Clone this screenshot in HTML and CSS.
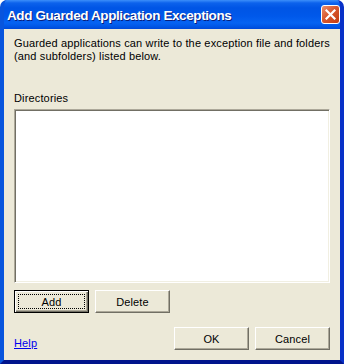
FILE: index.html
```html
<!DOCTYPE html>
<html>
<head>
<meta charset="utf-8">
<link rel="stylesheet" href="styles.css">
</head>
<body>
<div class="window">
  <div class="titlebar">
    <span class="title">Add Guarded Application Exceptions</span>
    <span class="close">
      <svg width="11" height="11" viewBox="0 0 11 11"><path d="M1.5 1.5 L9.5 9.5 M9.5 1.5 L1.5 9.5" stroke="#fff" stroke-width="2.2" stroke-linecap="square"/></svg>
    </span>
  </div>
  <div class="client">
    <p class="intro">Guarded applications can write to the exception file and folders<br>(and subfolders) listed below.</p>
    <div class="label">Directories</div>
    <div class="listbox"></div>
    <div class="row">
      <button class="btn default"><span class="focus">Add</span></button>
      <button class="btn">Delete</button>
    </div>
    <div class="footer">
      <a class="help" href="#">Help</a>
      <div class="actions">
        <button class="btn">OK</button>
        <button class="btn">Cancel</button>
      </div>
    </div>
  </div>
</div>
</body>
</html>
```

FILE: styles.css
```css
html, body {
  margin: 0;
  padding: 0;
  background: #ffffff;
}
.window {
  width: 344px;
  height: 364px;
  box-sizing: border-box;
  display: flex;
  flex-direction: column;
  border-radius: 7px 7px 0 0;
  background: #0a50dc;
  border-left: 4px solid #0855dd;
  border-right: 4px solid #0831c8;
  border-bottom: 4px solid #00148c;
  overflow: hidden;
}
.titlebar {
  height: 29px;
  margin: 0 -4px;
  padding: 0 4px 0 7px;
  box-sizing: border-box;
  display: flex;
  align-items: center;
  justify-content: space-between;
  background: linear-gradient(to bottom, #3c8ffa 0px, #0c62ec 3px, #0055e5 8px, #0058ea 16px, #0663f2 23px, #0054e3 27px, #0048d8 29px);
}
.title {
  font-family: "Liberation Sans", Arial, sans-serif;
  font-weight: bold;
  font-size: 13.5px;
  letter-spacing: -0.4px;
  color: #ffffff;
  text-shadow: 1px 1px 0 #0a1e7a;
  padding-top: 1px;
}
.close {
  width: 19px;
  height: 19px;
  box-sizing: border-box;
  border: 1px solid #ffffff;
  border-radius: 3px;
  background: linear-gradient(135deg, #ea8f6e 0%, #d8582e 45%, #c23c12 100%);
  display: flex;
  align-items: center;
  justify-content: center;
  margin-top: -1px;
}
.client {
  flex: 1;
  background: #ece9d8;
  padding: 8px 10px 10px 10px;
  display: flex;
  flex-direction: column;
  font-family: "Liberation Sans", Arial, sans-serif;
  font-size: 11px;
  line-height: 13px;
  letter-spacing: 0.15px;
  color: #000000;
}
.intro {
  margin: 0;
}
.label {
  margin-top: 29px;
}
.listbox {
  margin-top: 4px;
  height: 174px;
  box-sizing: border-box;
  background: #ffffff;
  border: 1px solid;
  border-color: #aca899 #ffffff #ffffff #aca899;
  box-shadow: inset 1px 1px 0 #716f64, inset -1px -1px 0 #f1efe2;
}
.row {
  margin-top: 7px;
  display: flex;
  gap: 6px;
}
.btn {
  width: 75px;
  height: 23px;
  box-sizing: border-box;
  padding: 0;
  margin: 0;
  font-family: "Liberation Sans", Arial, sans-serif;
  font-size: 11px;
  letter-spacing: 0.15px;
  color: #000000;
  background: #ece9d8;
  border: 1px solid;
  border-color: #ffffff #716f64 #716f64 #ffffff;
  box-shadow: inset -1px -1px 0 #aca899;
  border-radius: 0;
}
.btn.default {
  border: 1px solid #000000;
  box-shadow: inset 1px 1px 0 #ffffff, inset -1px -1px 0 #716f64, inset -2px -2px 0 #aca899;
  padding: 3px;
}
.focus {
  display: flex;
  align-items: center;
  justify-content: center;
  height: 100%;
  box-sizing: border-box;
  border: 1px dotted #000000;
}
.footer {
  margin-top: auto;
  display: flex;
  align-items: flex-end;
  justify-content: space-between;
}
.help {
  color: #0000ee;
  text-decoration: underline;
}
.actions {
  display: flex;
  gap: 6px;
}
```
